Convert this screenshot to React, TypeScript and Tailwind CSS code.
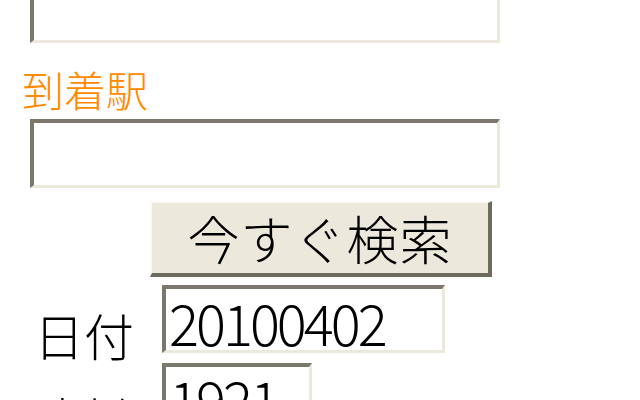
export default function App() {
  const field =
    "block box-border border-t-4 border-l-4 border-b-[3px] border-r-[3px] border-t-[#7a776b] border-l-[#7a776b] border-b-[#ebe8dc] border-r-[#ebe8dc] bg-white outline-none";

  return (
    <div className="h-[400px] w-[640px] overflow-hidden bg-white font-['Noto_Sans_CJK_JP',sans-serif] font-light text-black">
      {/* departure field, scrolled partly out of view */}
      <div className={`${field} ml-[30px] mt-[-26px] h-[69px] w-[470px]`} />

      <div className="ml-[22px] mt-[22px] h-[48px] text-[42px] leading-[48px] text-[#ff8a00]">到着駅</div>

      <input readOnly value="" className={`${field} ml-[30px] mt-[6px] h-[69px] w-[470px]`} />

      <button className="ml-[150px] mt-[13px] box-border flex h-[76px] w-[342px] items-center justify-center border-t-2 border-l-2 border-b-4 border-r-4 border-t-[#faf9f4] border-l-[#faf9f4] border-b-[#6d6a5e] border-r-[#6d6a5e] bg-[#ece9dc] font-light text-[52px] leading-none tracking-[1px]">
        今すぐ検索
      </button>

      <div className="mt-[8px] flex items-start">
        <div className="ml-[34px] mt-[22px] w-[128px] text-[50px] leading-[54px]">日付</div>
        <input
          readOnly
          value="20100402"
          className={`${field} h-[68px] w-[283px] pl-[3px] pt-[4px] font-['Noto_Sans_CJK_JP',sans-serif] text-[56px] font-light leading-none tracking-[-3px]`}
        />
      </div>

      <div className="mt-[2px] flex items-start">
        <div className="ml-[30px] mt-[28px] w-[132px] text-[49px] leading-[54px]">時刻</div>
        <input
          readOnly
          value="1921"
          className={`${field} h-[68px] w-[150px] pl-[3px] pt-[2px] font-['Noto_Sans_CJK_JP',sans-serif] text-[56px] font-light leading-none tracking-[-3px]`}
        />
      </div>
    </div>
  );
}
